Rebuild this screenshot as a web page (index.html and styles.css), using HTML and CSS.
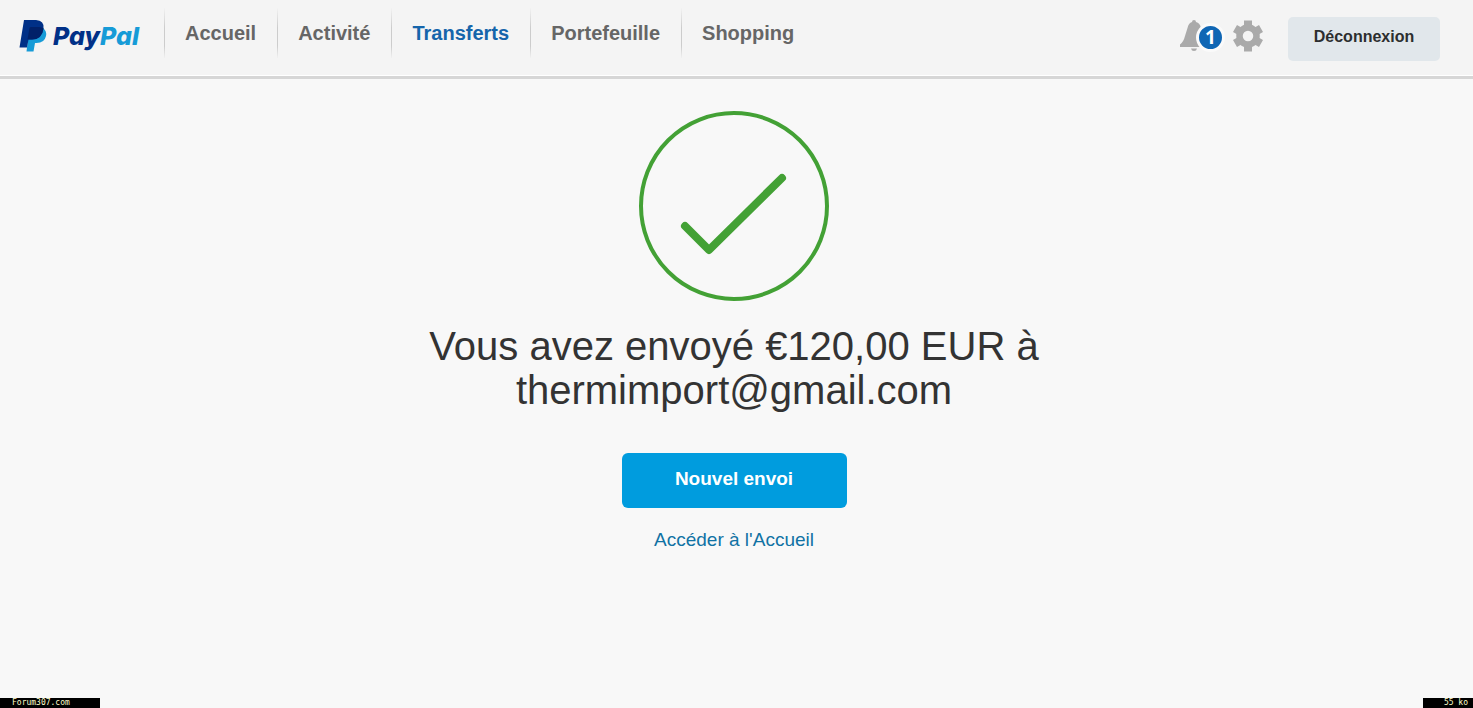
FILE: index.html
```html
<!DOCTYPE html>
<html lang="fr">
<head>
    <meta charset="UTF-8">
    <meta name="viewport" content="width=device-width, initial-scale=1.0">
    <title>PayPal</title>
    <link rel="stylesheet" href="styles.css">
</head>
<body>
    <header class="header">
        <a href="#" class="logo">
            <svg class="logo-mark" viewBox="0 0 28 32" aria-hidden="true">
                <path fill="#169bd7" d="M10.500 8H24Q28 11 27 16Q25.500 23 17.500 23H16L14.500 31.500H7.500Z"/>
                <path fill="#003087" d="M5 0H17Q25.500 0.500 24.500 8.500Q23 19.500 13 19.500H9.500L8 27.500H0.500Z"/>
                <path fill="#012169" d="M10.500 8Q10.700 7 12 7H20Q23 7 24.500 8.500Q23 19.500 13 19.500H8.500Z"/>
            </svg>
            <span class="logo-text">Pay<span>Pal</span></span>
        </a>

        <nav class="nav">
            <a href="#">Accueil</a>
            <a href="#">Activité</a>
            <a href="#" class="active">Transferts</a>
            <a href="#">Portefeuille</a>
            <a href="#">Shopping</a>
        </nav>

        <div class="actions">
            <button class="icon-btn bell-btn" aria-label="Notifications">
                <svg class="bell" viewBox="0 0 28 32" aria-hidden="true">
                    <path fill="#aaa" d="M12 2Q12 0 14 0T16 2Q20 3 21 8L23 16Q24 21 27.500 24V27H0V24.500Q3.500 22 5 16L7.500 8Q8.500 3 12 2Z"/>
                    <path fill="#aaa" d="M11 28.500H17Q16.500 31 14 31T11 28.500Z"/>
                </svg>
                <span class="badge">1</span>
            </button>
            <button class="icon-btn" aria-label="Paramètres">
                <svg class="gear" viewBox="-16 -16 32 32" aria-hidden="true">
                    <g fill="none" stroke="#aaa">
                        <circle r="8.500" stroke-width="6.500"/>
                        <path stroke-width="8" d="M0-15.500V-9M0 15.500V9M-13-7.500L-7.800-4.500M13 7.500L7.800 4.500M13-7.500L7.800-4.500M-13 7.500L-7.800 4.500"/>
                    </g>
                </svg>
            </button>
            <button class="logout">Déconnexion</button>
        </div>
    </header>

    <main class="main">
        <svg class="check" viewBox="0 0 190 190" aria-hidden="true">
            <g fill="none" stroke="#43a135" stroke-linecap="round" stroke-linejoin="round">
                <circle cx="95" cy="95" r="93" stroke-width="4"/>
                <path stroke-width="8" d="M46 115L70 139L143 67"/>
            </g>
        </svg>
        <h1 class="title">Vous avez envoyé €120,00 EUR à thermimport@gmail.com</h1>
        <button class="send-btn">Nouvel envoi</button>
        <a href="#" class="home-link">Accéder à l'Accueil</a>
    </main>

    <footer class="footer">
        <span class="site">Forum307.com</span>
        <span class="size">55 ko</span>
    </footer>
</body>
</html>
```
FILE: styles.css
```css
body {
    margin: 0;
    min-height: 100vh;
    display: flex;
    flex-direction: column;
    background: #f8f8f8;
    color: #333;
    font-family: "Liberation Sans", Arial, sans-serif;
}

a {
    text-decoration: none;
}

button {
    border: 0;
    padding: 0;
    font-family: inherit;
    font-weight: bold;
    cursor: pointer;
}

/* Header */
.header {
    display: flex;
    align-items: flex-start;
    height: 76px;
    padding: 0 33px 0 19px;
    background: #f4f4f4;
    border-bottom: 3px solid #d6d6d6;
    box-shadow: inset 0 -1px #fff;
}

.logo {
    display: flex;
    gap: 6px;
    width: 145px;
    padding-top: 20px;
}

.logo-mark {
    width: 28px;
    height: 32px;
}

.logo-text {
    color: #003087;
    font-family: Inter, sans-serif;
    font-size: 25px;
    font-style: italic;
    font-weight: 800;
    line-height: 32px;
}

.logo-text span {
    color: #169bd7;
}

.nav {
    display: flex;
    padding-top: 8px;
}

.nav a {
    padding: 0 21px 0 20px;
    border-left: 1px solid;
    border-image: linear-gradient(transparent, #ccc 40%, #ccc 75%, transparent) 1;
    color: #666;
    font-size: 20px;
    font-weight: bold;
    line-height: 50px;
}

.nav a.active {
    color: #1565ab;
}

.actions {
    display: flex;
    align-items: center;
    margin-left: auto;
    padding-top: 17px;
}

.icon-btn {
    display: flex;
    padding-bottom: 6px;
    background: none;
}

.bell-btn {
    position: relative;
    margin-right: 24px;
}

.bell {
    width: 28px;
    height: 32px;
}

.badge {
    position: absolute;
    top: 3px;
    left: 16px;
    width: 23px;
    height: 23px;
    border: 3px solid #fafafa;
    border-radius: 50%;
    background: #0f66b4;
    color: #fff;
    font-family: "Open Sans", sans-serif;
    font-size: 19px;
    line-height: 23px;
}

.gear {
    width: 32px;
    height: 32px;
}

.logout {
    width: 152px;
    height: 44px;
    margin-left: 24px;
    padding-bottom: 5px;
    border-radius: 5px;
    background: #e1e7eb;
    color: #2c2e2f;
    font-size: 16px;
}

/* Confirmation */
.main {
    flex: 1;
    display: flex;
    flex-direction: column;
    align-items: center;
    padding: 32px 5px 0 0;
}

.check {
    width: 190px;
    height: 190px;
}

.title {
    max-width: 640px;
    margin: 23px 0 41px;
    font-size: 40px;
    font-weight: normal;
    line-height: 44px;
    text-align: center;
}

.send-btn {
    width: 225px;
    height: 55px;
    padding-bottom: 3px;
    border-radius: 6px;
    background: #009cde;
    color: #fff;
    font-size: 19px;
}

.home-link {
    margin-top: 20px;
    color: #1072a4;
    font-size: 19px;
    line-height: 24px;
}

/* Corner labels */
.footer {
    display: flex;
    justify-content: space-between;
    color: #ffffcc;
    font-family: "DejaVu Sans Mono", monospace;
    font-size: 8px;
    line-height: 10px;
}

.site,
.size {
    background: #000;
}

.site {
    width: 88px;
    padding-left: 12px;
}

.size {
    width: 45px;
    padding-right: 5px;
    text-align: right;
}
```
